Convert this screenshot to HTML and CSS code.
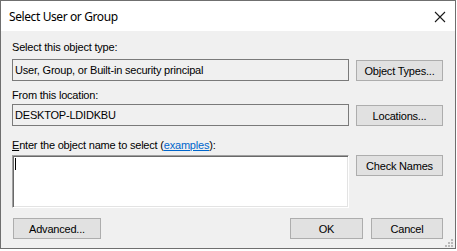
FILE: index.html
```html
<!DOCTYPE html>
<html lang="en">
<head>
    <meta charset="UTF-8">
    <title>Select User or Group</title>
    <link rel="stylesheet" href="styles.css">
</head>
<body>
    <div class="window">
        <div class="titlebar">
            <span class="title">Select User or Group</span>
            <svg class="close" width="12" height="12" viewBox="0 0 12 12">
                <path d="M1 1 L11 11 M11 1 L1 11" stroke="#1a1a1a" stroke-width="1.1" fill="none"/>
            </svg>
        </div>

        <div class="content">
            <div class="label label-type">Select this object type:</div>
            <div class="row">
                <div class="field">User, Group, or Built-in security principal</div>
                <button class="btn">Object Types...</button>
            </div>

            <div class="label label-loc">From this location:</div>
            <div class="row row-loc">
                <div class="field">DESKTOP-LDIDKBU</div>
                <button class="btn">Locations...</button>
            </div>

            <div class="label label-names"><u>E</u>nter the object name to select (<a href="#">examples</a>):</div>
            <div class="row row-names">
                <div class="names"><span class="caret"></span></div>
                <button class="btn">Check Names</button>
            </div>

            <div class="footer">
                <button class="btn btn-adv">Advanced...</button>
                <div class="spacer"></div>
                <button class="btn btn-ok">OK</button>
                <button class="btn">Cancel</button>
            </div>
        </div>

        <!-- resize grip -->
        <svg class="grip" width="9" height="9" viewBox="0 0 9 9">
            <rect x="7" y="1" width="2" height="2" fill="#b9b9b9"/>
            <rect x="4" y="4" width="2" height="2" fill="#b9b9b9"/>
            <rect x="7" y="4" width="2" height="2" fill="#b9b9b9"/>
            <rect x="1" y="7" width="2" height="2" fill="#b9b9b9"/>
            <rect x="4" y="7" width="2" height="2" fill="#b9b9b9"/>
            <rect x="7" y="7" width="2" height="2" fill="#b9b9b9"/>
        </svg>
    </div>
</body>
</html>
```

FILE: styles.css
```css
body {
    margin: 0;
    background: #ffffff;
    font-family: 'Liberation Sans', Arial, sans-serif;
    font-size: 11px;
    letter-spacing: -0.2px;
    color: #000;
}

/* 視窗外框 */
.window {
    position: relative;
    width: 454px;
    height: 247px;
    border: 1px solid #6f6f6f;
    background: #f0f0f0;
}

.titlebar {
    height: 30px;
    background: #ffffff;
    display: flex;
    align-items: center;
    justify-content: space-between;
    padding: 0 9px 0 8px;
}

    .titlebar .title {
        font-family: 'Noto Sans', 'Open Sans', sans-serif;
        font-size: 12px;
        letter-spacing: -0.4px;
        color: #000;
        margin-top: 1px;
    }

    .titlebar .close {
        margin-top: 1px;
    }

.content {
    padding: 0 12px 0 11px;
}

.label {
    line-height: 13px;
    white-space: nowrap;
}

.label-type {
    padding-top: 10px;
    margin-bottom: 5px;
}

.label-loc {
    margin-top: 8px;
    margin-bottom: 2px;
}

.label-names {
    margin-top: 13px;
    margin-bottom: 3px;
}

    .label-names a {
        color: #0066cc;
    }

.row {
    display: flex;
    align-items: flex-start;
    gap: 7px;
}

/* 唯讀欄位 */
.field {
    width: 333px;
    height: 20px;
    line-height: 20px;
    border: 1px solid #7a7a7a;
    padding-left: 2px;
    white-space: nowrap;
    overflow: hidden;
}

.row .btn {
    margin-top: 1px;
    width: 87px;
}

.row-names .btn {
    margin-top: 0;
}

/* 輸入框 (凹陷邊框) */
.names {
    width: 335px;
    height: 51px;
    background: #ffffff;
    border: 1px solid;
    border-color: #a0a0a0 #ffffff #ffffff #a0a0a0;
    box-shadow: inset 1px 1px 0 #696969, inset -1px -1px 0 #e3e3e3;
    position: relative;
}

.caret {
    position: absolute;
    left: 2px;
    top: 2px;
    width: 1px;
    height: 12px;
    background: #000;
}

.btn {
    height: 21px;
    padding: 0;
    font-family: 'Liberation Sans', Arial, sans-serif;
    font-size: 11px;
    letter-spacing: -0.2px;
    color: #000;
    background: #e1e1e1;
    border: 1px solid #adadad;
    border-radius: 0;
}

.footer {
    display: flex;
    margin-top: 10px;
    gap: 8px;
}

.btn-adv {
    width: 88px;
    margin-left: 1px;
}

.btn-ok {
    width: 73px;
}

.footer .btn:last-child {
    width: 72px;
}

.spacer {
    flex: 1;
}

.grip {
    position: absolute;
    right: 2px;
    bottom: 1px;
}
```
